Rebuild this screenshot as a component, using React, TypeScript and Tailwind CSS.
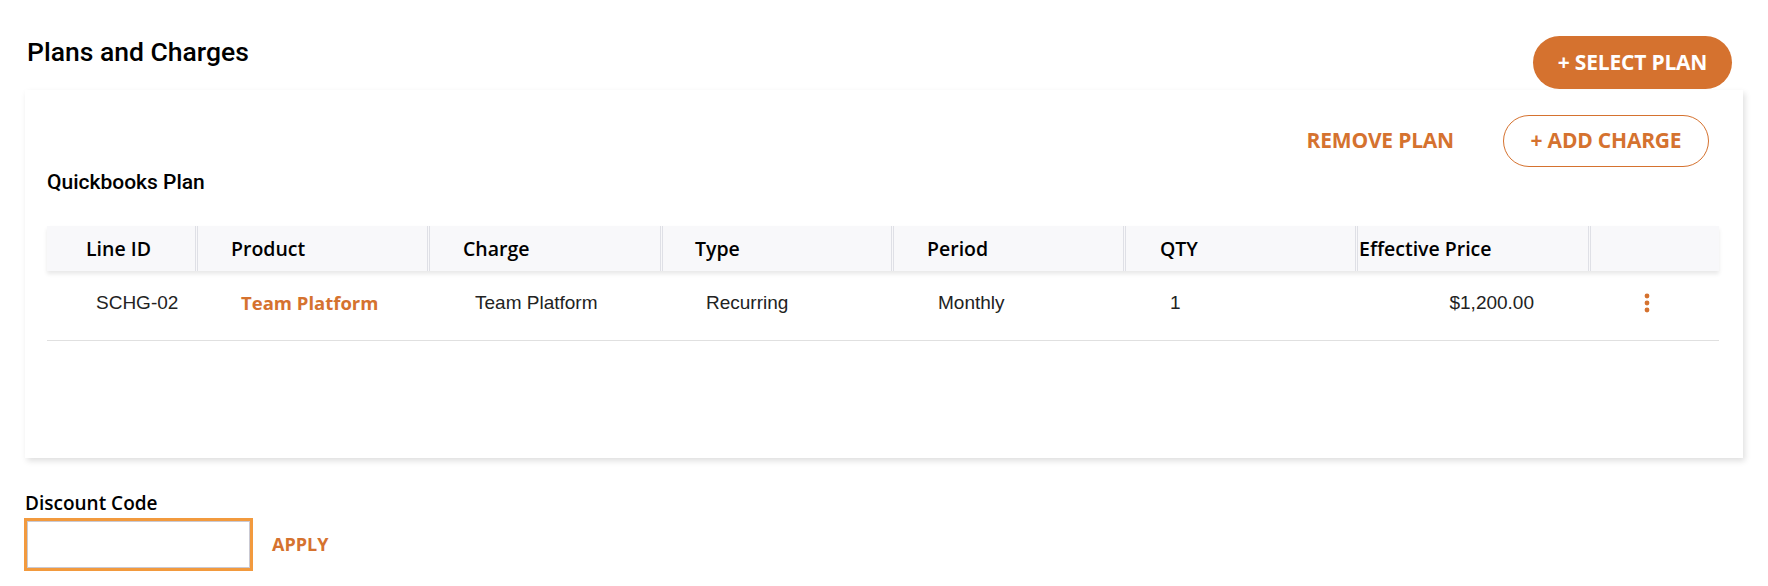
const ORANGE = 'text-[#d5722f]';

const cols = [
  { label: 'Line ID', w: 'w-[148px]', pl: 'pl-[39px]' },
  { label: 'Product', w: 'w-[232px]', pl: 'pl-[33px]' },
  { label: 'Charge', w: 'w-[233px]', pl: 'pl-[33px]' },
  { label: 'Type', w: 'w-[231px]', pl: 'pl-[32px]' },
  { label: 'Period', w: 'w-[232px]', pl: 'pl-[33px]' },
  { label: 'QTY', w: 'w-[232px]', pl: 'pl-[34px]' },
  { label: 'Effective Price', w: 'w-[233px]', pl: 'pl-[1px]' },
  { label: '', w: 'flex-1', pl: '' },
];

function KebabIcon() {
  return (
    <svg width="6" height="20" viewBox="0 0 6 20" className="fill-[#d5722f]">
      <circle cx="3" cy="3" r="2.4" />
      <circle cx="3" cy="10" r="2.4" />
      <circle cx="3" cy="17" r="2.4" />
    </svg>
  );
}

export default function App() {
  return (
    <div className="h-[586px] w-[1768px] bg-white px-[25px] pt-[36px] font-['Open_Sans',sans-serif]">
      {/* page header */}
      <div className="flex items-start justify-between pl-[2px] pr-[11px]">
        <h2 className="font-['Roboto',sans-serif] text-[26.5px] font-medium leading-[32px] text-black">
          Plans and Charges
        </h2>
        <button className="flex h-[53px] w-[199px] items-center justify-center rounded-full bg-[#d5722f] text-[21px] font-bold tracking-[-0.2px] text-white">
          + SELECT PLAN
        </button>
      </div>

      {/* plan card */}
      <div className="mt-px h-[368px] bg-white pl-[22px] pr-[24px] pt-[25px] shadow-[2px_3px_6px_rgba(0,0,0,0.13)]">
        <div className="flex h-[52px] items-center justify-end gap-[49px] pr-[10px]">
          <button className={`text-[21px] font-bold tracking-[-0.2px] ${ORANGE}`}>REMOVE PLAN</button>
          <button
            className={`flex h-[52px] w-[206px] items-center justify-center rounded-full border border-[#d5722f] text-[21px] font-bold tracking-[-0.2px] ${ORANGE}`}
          >
            + ADD CHARGE
          </button>
        </div>

        <div className="mt-[3px] font-['Roboto',sans-serif] text-[21px] font-medium leading-[24px] text-black">
          Quickbooks Plan
        </div>

        <div className="mt-[32px]">
          <div className="relative z-10 flex h-[45px] bg-[#f8f8fa] shadow-[0_3px_4px_rgba(0,0,0,0.09)]">
            {cols.map((c, i) => (
              <div
                key={i}
                className={`flex items-center ${c.w} ${c.pl} text-[19.5px] font-semibold text-black ${
                  i > 0 ? 'border-l-[3px] border-double border-[#dfe0e6]' : ''
                }`}
              >
                {c.label}
              </div>
            ))}
          </div>
          <div className="flex h-[70px] items-center border-b border-[#e0e0e0] pb-[5px] font-['Liberation_Sans',Arial,sans-serif] text-[19px] text-[#222]">
            <div className="w-[148px] pl-[49px]">SCHG-02</div>
            <div className={`w-[232px] pl-[46px] font-['Open_Sans',sans-serif] text-[18.5px] font-bold ${ORANGE}`}>
              Team Platform
            </div>
            <div className="w-[233px] pl-[48px]">Team Platform</div>
            <div className="w-[231px] pl-[46px]">Recurring</div>
            <div className="w-[232px] pl-[47px]">Monthly</div>
            <div className="w-[232px] pl-[47px]">1</div>
            <div className="flex w-[233px] justify-end pr-[54px]">$1,200.00</div>
            <div className="flex flex-1 pl-[56px]">
              <KebabIcon />
            </div>
          </div>
        </div>
      </div>

      {/* discount */}
      <div className="mt-[34px] text-[19px] font-semibold leading-[22px] text-black">Discount Code</div>
      <div className="mt-[4px] flex items-center">
        <input
          className="-ml-px h-[53px] w-[229px] border-[3px] border-[#f29a3e] bg-white shadow-[inset_0_0_0_1px_#c9c9d3] outline-none"
          type="text"
        />
        <button className={`ml-[19px] text-[18px] font-bold ${ORANGE}`}>APPLY</button>
      </div>
    </div>
  );
}
